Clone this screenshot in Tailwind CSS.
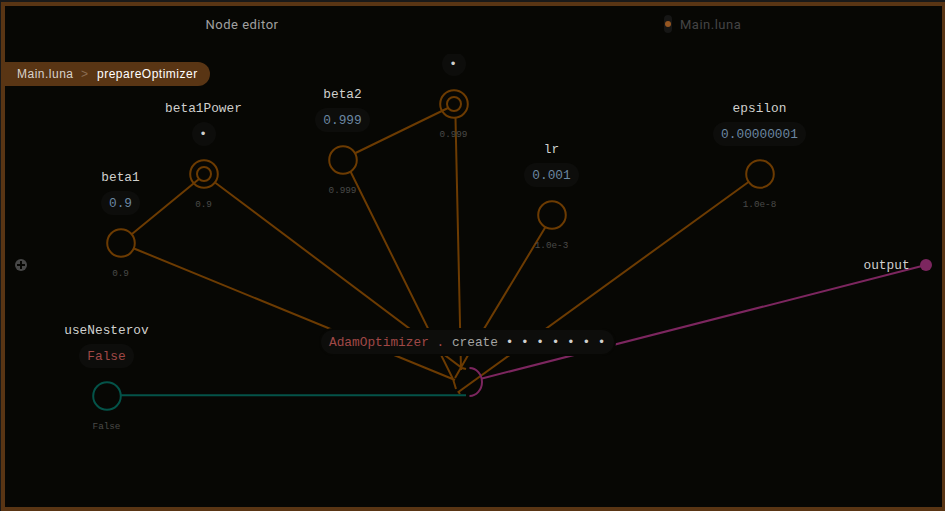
<!DOCTYPE html>
<html lang="en">
<head>
<meta charset="utf-8">
<title>Node editor</title>
<script src="https://cdn.jsdelivr.net/npm/@tailwindcss/browser@4"></script>
</head>
<body class="bg-[#191919]">
<div class="w-[945px] h-[511px] pl-px pt-0.5 overflow-hidden">
<main class="relative w-[945px] h-[509px] border-4 border-[#593514] bg-[#070704] overflow-hidden font-['Liberation_Mono',monospace] text-[12.8px] text-[#d0d0ce]">
  <!-- canvas shares the window's coordinate system -->
  <div class="absolute -left-[5px] -top-[6px] w-[945px] h-[511px]">
    <svg class="absolute inset-0" width="945" height="511" fill="none" stroke-width="2">
      <g stroke="#6c3b02">
        <path d="M132 234L199 179M134 248.500L455 380M215 182.500L462 368L466 369M355.500 153L448 108M350.500 171.500L453 379L456 389M455.500 118L461 370M545.500 227L467 357L455 378M748.500 182L458.500 392L460 394"/>
        <circle cx="121" cy="243" r="13.800"/>
        <circle cx="204" cy="174" r="13.800"/><circle cx="204" cy="174" r="7"/>
        <circle cx="343" cy="160" r="13.800"/>
        <circle cx="454" cy="104" r="13.800"/><circle cx="454" cy="104" r="7"/>
        <circle cx="552" cy="215" r="13.800"/>
        <circle cx="760" cy="174" r="13.800"/>
      </g>
      <g stroke="#045349"><path d="M121 395.300H466"/><circle cx="107" cy="396" r="13.800"/></g>
      <path d="M469.500 368A12.500 14 0 0 1 469.500 396M482 378.500L922 266" stroke="#7c265f"/>
      <circle cx="926" cy="265" r="6" fill="#7c265f"/>
      <circle cx="21" cy="265" r="6" fill="#484848"/>
      <path d="M21 261V269M17 265H25" stroke="#070704"/>
    </svg>

    <div class="absolute left-[60.5px] top-[167px] w-[120px] flex flex-col items-center">
      <span class="h-5 leading-[22px]">beta1</span>
      <span class="mt-1 h-6 leading-[26px] px-2 rounded-full bg-[#0d0d0b] text-[#6b87a2]">0.9</span>
      <span class="mt-[52px] h-3 leading-[14px] text-[9.3px] text-[#4a4a48]">0.9</span>
    </div>
    <div class="absolute left-[143.5px] top-[98px] w-[120px] flex flex-col items-center">
      <span class="h-5 leading-[22px]">beta1Power</span>
      <span class="mt-1 size-6 rounded-full bg-[#0d0d0b] leading-[26px] text-center -indent-px">•</span>
      <span class="mt-[52px] h-3 leading-[14px] text-[9.3px] text-[#4a4a48]">0.9</span>
    </div>
    <div class="absolute left-[282.5px] top-[84px] w-[120px] flex flex-col items-center">
      <span class="h-5 leading-[22px]">beta2</span>
      <span class="mt-1 h-6 leading-[26px] px-2 rounded-full bg-[#0d0d0b] text-[#6b87a2]">0.999</span>
      <span class="mt-[52px] h-3 leading-[14px] text-[9.3px] text-[#4a4a48]">0.999</span>
    </div>
    <div class="absolute left-[393.5px] top-[54px] w-[120px] h-[90px] flex flex-col items-center overflow-hidden">
      <span class="-mt-0.5 shrink-0 size-6 rounded-full bg-[#0d0d0b] leading-[26px] text-center -indent-px">•</span>
      <span class="mt-[52px] h-3 leading-[14px] text-[9.3px] text-[#4a4a48]">0.999</span>
    </div>
    <div class="absolute left-[491.5px] top-[139px] w-[120px] flex flex-col items-center">
      <span class="h-5 leading-[22px]">lr</span>
      <span class="mt-1 h-6 leading-[26px] px-2 rounded-full bg-[#0d0d0b] text-[#6b87a2]">0.001</span>
      <span class="mt-[52px] h-3 leading-[14px] text-[9.3px] text-[#4a4a48]">1.0e-3</span>
    </div>
    <div class="absolute left-[699.5px] top-[98px] w-[120px] flex flex-col items-center">
      <span class="h-5 leading-[22px]">epsilon</span>
      <span class="mt-1 h-6 leading-[26px] px-2 rounded-full bg-[#0d0d0b] text-[#6b87a2]">0.00000001</span>
      <span class="mt-[52px] h-3 leading-[14px] text-[9.3px] text-[#4a4a48]">1.0e-8</span>
    </div>
    <div class="absolute left-[46.5px] top-[320px] w-[120px] flex flex-col items-center">
      <span class="h-5 leading-[22px]">useNesterov</span>
      <span class="mt-1 h-6 leading-[26px] px-2 rounded-full bg-[#0d0d0b] text-[#a04846]">False</span>
      <span class="mt-[52px] h-3 leading-[14px] text-[9.3px] text-[#4a4a48]">False</span>
    </div>

    <div class="absolute left-[321px] top-[330px] w-[293px] h-6 leading-[26px] px-2 rounded-full bg-[#0d0d0b] ring-2 ring-[#070704] whitespace-pre text-[#a5a5a3]"><span class="text-[#a04846]">AdamOptimizer .</span> create <span class="text-[#d0d0ce]">• • • • • • •</span></div>
    <span class="absolute left-[863.5px] top-[256px] leading-5">output</span>
  </div>

  <header class="absolute left-0 top-px w-full h-9 flex font-[Roboto,sans-serif] text-[13px] tracking-[0.5px]">
    <div class="w-[474px] text-center leading-9 text-[#a0a0a0]">Node editor</div>
    <div class="flex pl-[185px] text-[#444444]">
      <i class="mt-2 w-2 h-[18px] rounded-full bg-[#161615] flex justify-center pt-[5.500px]"><b class="size-1.5 rounded-full bg-[#955621]"></b></i>
      <span class="ml-2 leading-9">Main.luna</span>
    </div>
  </header>
  <nav class="absolute left-0 top-14 w-[205px] h-6 pl-3 flex items-center rounded-r-full bg-[#593514] font-['Liberation_Sans',sans-serif] text-[12px] tracking-[0.5px]">
    <span class="w-16 text-[#d8d2cc]">Main.luna</span><span class="w-4 text-[#8b6d52]">&gt;</span><span class="text-white">prepareOptimizer</span>
  </nav>
</main>
</div>
</body>
</html>
